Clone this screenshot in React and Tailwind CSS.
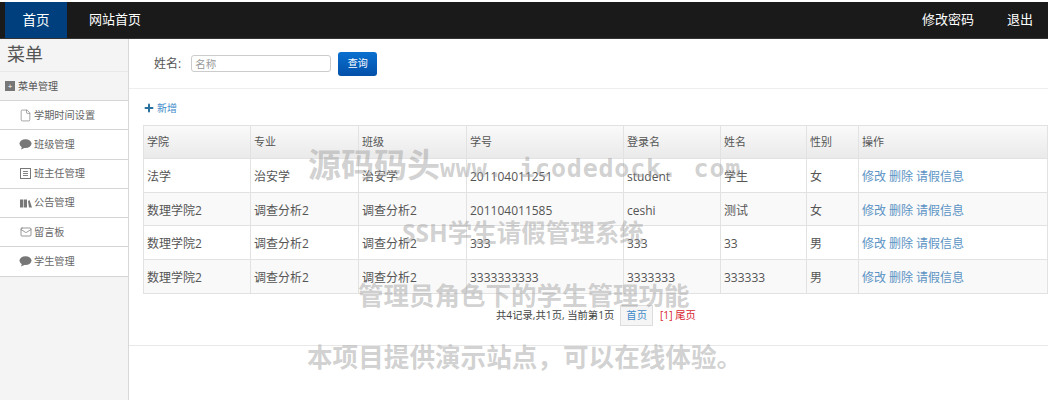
import React from "react";
import { File, Mail, Plus } from "lucide-react";

const Bubble = () => (
  <svg width="13" height="11" viewBox="0 0 13 11">
    <ellipse cx="6.5" cy="4.6" rx="6" ry="4.3" fill="#777" />
    <path d="M3 7.5 L2 10.5 L6.5 8.5 Z" fill="#777" />
  </svg>
);

const ListAlt = () => (
  <svg width="11" height="11" viewBox="0 0 11 11" fill="none" stroke="#777">
    <rect x="0.5" y="0.5" width="10" height="10" />
    <path d="M3 3.5H8M3 5.5H8M3 7.5H8" strokeWidth="0.9" />
  </svg>
);

const Books = () => (
  <svg width="12" height="9" viewBox="0 0 12 9" fill="#777">
    <rect x="0" y="0.5" width="3.2" height="8" />
    <rect x="3.8" y="0.5" width="3.2" height="8" />
    <path d="M8 2 L9.5 1 L12 8.5 H9 Z" />
  </svg>
);

const menuItems = [
  { label: "学期时间设置", icon: <File size={13} strokeWidth={1.2} className="text-[#777]" /> },
  { label: "班级管理", icon: <Bubble /> },
  { label: "班主任管理", icon: <ListAlt /> },
  { label: "公告管理", icon: <Books /> },
  { label: "留言板", icon: <Mail size={12} strokeWidth={1.5} className="text-[#777]" /> },
  { label: "学生管理", icon: <Bubble /> },
];

const columns = ["学院", "专业", "班级", "学号", "登录名", "姓名", "性别", "操作"];

const rows = [
  ["法学", "治安学", "治安学", "201104011251", "student", "学生", "女"],
  ["数理学院2", "调查分析2", "调查分析2", "201104011585", "ceshi", "测试", "女"],
  ["数理学院2", "调查分析2", "调查分析2", "333", "333", "33", "男"],
  ["数理学院2", "调查分析2", "调查分析2", "3333333333", "3333333", "333333", "男"],
];

export default function App() {
  return (
    <div className="relative w-[1048px] h-[400px] overflow-hidden bg-white pt-[2px] font-['Open_Sans','Noto_Sans_CJK_SC',sans-serif] text-[#555]">
      {/* Top nav */}
      <div className="flex h-[37px] items-stretch justify-between bg-[#1a1a1a] border-b border-[#333] pl-[5px] text-[13px] text-white">
        <div className="flex">
          <div className="flex w-[62px] items-center justify-center bg-[#003f7d] text-[13.5px]">首页</div>
          <div className="flex items-center pl-[22px]">网站首页</div>
        </div>
        <div className="flex items-center gap-[33px] pr-[15px]">
          <span>修改密码</span>
          <span>退出</span>
        </div>
      </div>

      <div className="flex h-[361px]">
        {/* Sidebar */}
        <div className="w-[129px] shrink-0 border-r border-[#d8d8d8] bg-[#f4f4f4]">
          <div className="h-[33px] border-b border-[#e8e8e8] pl-[7px] pt-[2px] text-[18px] leading-[26px] text-[#555]">菜单</div>
          <div className="flex h-[29px] items-center gap-[3px] border-b border-[#d5d5d5] pl-[5px] text-[10px] text-[#555]">
            <span className="flex h-[10px] w-[10px] items-center justify-center bg-[#777] text-[8px] leading-none text-white">+</span>
            菜单管理
          </div>
          {menuItems.map((item) => (
            <div key={item.label} className="flex h-[29.3px] items-center border-b border-[#d5d5d5] bg-white pl-[19px] text-[10.2px] text-[#666]">
              <span className="flex w-[15px] justify-center pr-[2px]">{item.icon}</span>
              {item.label}
            </div>
          ))}
        </div>

        {/* Main */}
        <div className="min-w-0 flex-1">
          <div className="flex h-[50px] items-center border-b border-[#eee] pl-[25px]">
            <span className="text-[12px] text-[#555]">姓名:</span>
            <input
              placeholder="名称"
              className="ml-[10px] h-[17px] w-[140px] rounded-[3px] border border-[#ccc] px-[3px] text-[10.5px] placeholder:text-[#999]"
            />
            <button className="ml-[7px] h-[24px] w-[39px] rounded-[3px] bg-gradient-to-b from-[#0a70d0] to-[#0450a8] text-[10px] text-white">查询</button>
          </div>

          <div className="flex h-[36px] items-center gap-[2px] pl-[14px] pt-[2px] text-[10px] text-[#428bca]">
            <Plus size={12} strokeWidth={4} className="text-[#2a6f9e]" />
            新增
          </div>

          <div className="pl-[14px]">
            <table className="w-[904px] table-fixed border-collapse text-[12px]">
              <colgroup>
                <col className="w-[107px]" />
                <col className="w-[108px]" />
                <col className="w-[108px]" />
                <col className="w-[157px]" />
                <col className="w-[97px]" />
                <col className="w-[86px]" />
                <col className="w-[52px]" />
                <col className="w-[189px]" />
              </colgroup>
              <thead>
                <tr className="h-[33px] bg-gradient-to-b from-[#fafafa] to-[#e9e9e9]">
                  {columns.map((c) => (
                    <th key={c} className="border border-[#e2e2e2] pl-[3px] pr-[4px] text-left text-[11px] font-normal text-[#555]">{c}</th>
                  ))}
                </tr>
              </thead>
              <tbody>
                {rows.map((row, i) => (
                  <tr key={i} className={`h-[33.7px] ${i % 2 === 1 ? "bg-[#f9f9f9]" : "bg-white"}`}>
                    {row.map((cell, j) => (
                      <td key={j} className="border border-[#e2e2e2] pl-[3px] pr-[4px] pt-[3px] text-[#555]">{cell}</td>
                    ))}
                    <td className="border border-[#e2e2e2] pl-[3px] pr-[4px] pt-[3px] text-[#5b93c4]">
                      <span className="mr-[3px]">修改</span>
                      <span className="mr-[3px]">删除</span>
                      <span>请假信息</span>
                    </td>
                  </tr>
                ))}
              </tbody>
            </table>
          </div>

          <div className="mt-[11px] flex h-[21px] items-center pl-[367px] text-[10.3px] text-[#444]">
            <span>共4记录,共1页, 当前第1页</span>
            <span className="ml-[6px] border border-[#ddd] bg-[#f5f5f5] px-[5px] py-[2px] text-[#428bca]">首页</span>
            <span className="ml-[7px] text-[#d9232e]">[1] 尾页</span>
          </div>

          <div className="mt-[19px] border-t border-[#e8e8e8]" />
        </div>
      </div>

      {/* Watermark over the page */}
      <div className="pointer-events-none absolute left-[308px] top-[147px] whitespace-nowrap text-[33px] font-bold leading-[36px] text-[#999]/45">
        源码码头<span className="font-['DejaVu_Sans_Mono',monospace] text-[25px] tracking-[0.8px]">www. icodedock. com</span>
      </div>
      <div className="pointer-events-none absolute left-[402px] top-[218px] whitespace-nowrap text-[24.5px] font-bold leading-[30px] text-[#999]/45">SSH学生请假管理系统</div>
      <div className="pointer-events-none absolute left-[358px] top-[278px] whitespace-nowrap text-[25.5px] font-bold leading-[34px] text-[#999]/45">管理员角色下的学生管理功能</div>
      <div className="pointer-events-none absolute left-[307px] top-[341px] whitespace-nowrap text-[25.6px] font-bold leading-[34px] text-[#999]/45">本项目提供演示站点{"\uFF0C"}可以在线体验。</div>
    </div>
  );
}
